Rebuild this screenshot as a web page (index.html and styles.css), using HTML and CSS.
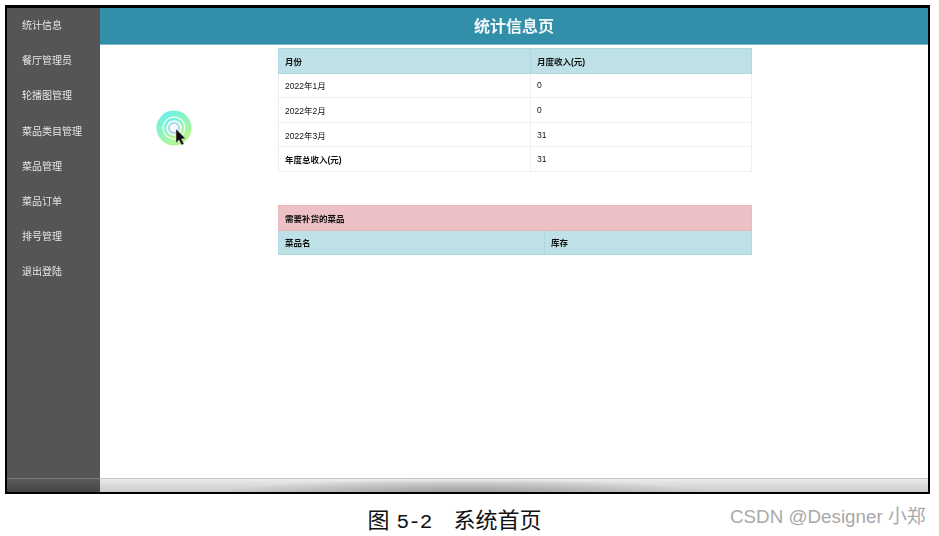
FILE: index.html
```html
<!DOCTYPE html>
<html lang="zh-CN">
<head>
  <meta charset="UTF-8">
  <title>统计信息页</title>
  <link rel="stylesheet" href="styles.css">
</head>
<body>
  <div class="frame">
    <div class="app">
      <ul class="sidebar">
        <li>统计信息</li>
        <li>餐厅管理员</li>
        <li>轮播图管理</li>
        <li>菜品类目管理</li>
        <li>菜品管理</li>
        <li>菜品订单</li>
        <li>排号管理</li>
        <li>退出登陆</li>
      </ul>
      <div class="main">
        <h1 class="title">统计信息页</h1>
        <table class="tbl income">
          <colgroup><col class="col-month"><col></colgroup>
          <tr class="head"><th>月份</th><th>月度收入(元)</th></tr>
          <tr><td>2022年1月</td><td>0</td></tr>
          <tr><td>2022年2月</td><td>0</td></tr>
          <tr><td>2022年3月</td><td>31</td></tr>
          <tr><th>年度总收入(元)</th><td>31</td></tr>
        </table>
        <table class="tbl restock">
          <colgroup><col class="col-name"><col></colgroup>
          <tr class="warn"><th colspan="2">需要补货的菜品</th></tr>
          <tr class="head"><th>菜品名</th><th>库存</th></tr>
        </table>
        <div class="pointer">
          <svg width="36" height="36" viewBox="0 0 36 36">
            <defs>
              <linearGradient id="ring" x1="0.2" y1="0" x2="0.8" y2="1">
                <stop offset="0" stop-color="#66f0ee"/>
                <stop offset="1" stop-color="#bdf97f"/>
              </linearGradient>
            </defs>
            <circle cx="18" cy="18" r="17.5" fill="url(#ring)"/>
            <circle cx="18" cy="18" r="11.5" fill="#f2fbf6"/>
            <circle cx="18" cy="18" r="9" fill="none" stroke="url(#ring)" stroke-width="2.5"/>
            <circle cx="18" cy="18" r="5" fill="#f6fbff" stroke="#a5d6ee" stroke-width="2"/>
            <path d="M20 19 L20 33 L23 30 L25.5 35 L28 34 L25.5 29 L29.5 28.5 Z" fill="#111" stroke="#ddd" stroke-width="0.5"/>
          </svg>
        </div>
      </div>
    </div>
    <div class="dock"><div class="dock-side"></div><div class="dock-main"></div></div>
  </div>
  <div class="foot">
    <p class="caption">图<span class="fig-no">5-2</span>系统首页</p>
    <span class="mark">CSDN @Designer 小郑</span>
  </div>
</body>
</html>
```

FILE: styles.css
```css
body { margin: 0; padding: 5px 0 0 5px; background: #fff; font-family: "Liberation Sans", "Noto Sans CJK SC", sans-serif; overflow: hidden; }
.frame { width: 921px; height: 484px; border: solid #000; border-width: 3px 2px 2px 2px; display: flex; flex-direction: column; }
.app { flex: 1; display: flex; min-height: 0; filter: blur(0.35px); }
.sidebar { width: 93px; margin: 0; padding: 0 0 0 15px; box-sizing: border-box; list-style: none; background: #555; color: #e6e6e6; font-size: 10px; line-height: 35.2px; }
.main { flex: 1; position: relative; background: #fff; }
.title { margin: 0; height: 37px; line-height: 38px; background: #318faa; border-bottom: 1px solid #7fbccb; box-sizing: border-box; color: #f2f7f9; font-size: 16px; font-weight: bold; text-align: center; }
.tbl { width: 474px; margin-left: 178px; border-collapse: collapse; table-layout: fixed; font-size: 8.5px; color: #111; }
.tbl th, .tbl td { height: 24.6px; padding: 0 0 0 6px; box-sizing: border-box; text-align: left; border: 1px solid #eef0f0; }
.income { margin-top: 3px; }
.restock { margin-top: 33px; }
.col-month { width: 252px; }
.col-name { width: 266px; }
.tbl .head th { background: #bee0e7; border-color: #afd8e1; }
.tbl .warn th { background: #ecc0c5; border-color: #e9b9be; }
.pointer { position: absolute; left: 56px; top: 102px; width: 36px; height: 36px; }
.dock { height: 14px; display: flex; border-top: 1px solid #c4c4c4; box-sizing: border-box; }
.dock-side { width: 93px; background: linear-gradient(#5c5c5c, #444); border-top: 1px solid #7a7a7a; margin-top: -1px; }
.dock-main { flex: 1; background: radial-gradient(ellipse 240px 13px at 44% 100%, #a0a0a0, rgba(160,160,160,0) 100%), linear-gradient(#ececec, #cacaca); }
.foot { position: relative; height: 42px; }
.caption { margin: 0; padding-top: 10px; width: 899px; text-align: center; font-size: 22px; line-height: 28px; color: #111; font-family: "Noto Sans CJK SC", sans-serif; }
.fig-no { margin: 0 22px 0 7px; font-family: "Liberation Mono", monospace; font-size: 21px; letter-spacing: -1px; }
.mark { position: absolute; left: 725px; top: 11px; font-size: 18.8px; line-height: 24px; color: #a9a9a9; }
```
